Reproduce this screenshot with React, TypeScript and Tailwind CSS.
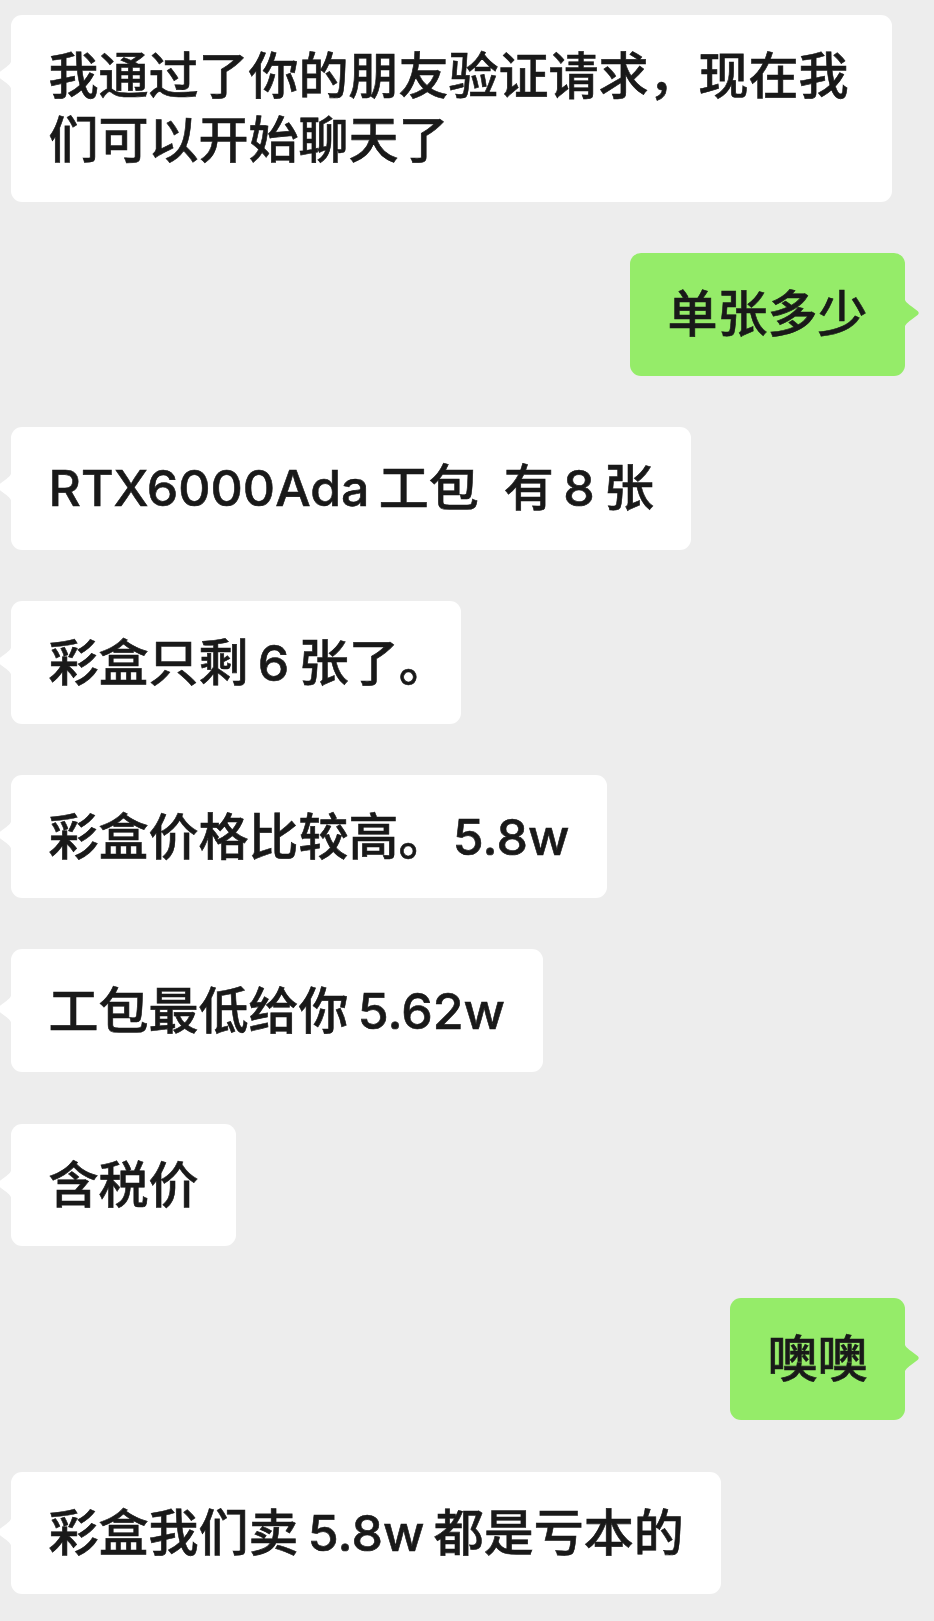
import React from 'react';

type Msg = { side: 'left' | 'right'; text: React.ReactNode };

const messages: Msg[] = [
  { side: 'left', text: '我通过了你的朋友验证请求，现在我们可以开始聊天了' },
  { side: 'right', text: '单张多少' },
  { side: 'left', text: 'RTX6000Ada 工包\u2002有 8 张' },
  {
    side: 'left',
    text: (
      <>
        彩盒只剩 6 张了<span className="tracking-[-0.5em]">。</span>
      </>
    ),
  },
  { side: 'left', text: '彩盒价格比较高。\u200a5.8w' },
  { side: 'left', text: '工包最低给你 5.62w' },
  { side: 'left', text: '含税价' },
  { side: 'right', text: '噢噢' },
  { side: 'left', text: '彩盒我们卖 5.8w 都是亏本的' },
];

const Tail: React.FC<{ side: 'left' | 'right' }> = ({ side }) => (
  <svg
    viewBox="0 0 16 36"
    className={
      side === 'right'
        ? 'absolute top-[42px] -right-[15px] w-[16px] h-[36px]'
        : 'absolute top-[42px] -left-[15px] w-[16px] h-[36px] -scale-x-100'
    }
  >
    {/* little pointer on the side of the bubble */}
    <path
      d="M0 0 C0 6 3 8 7 11 L13.6 16 Q15.8 18 13.6 20 L7 25 C3 28 0 30 0 36 Z"
      fill={side === 'right' ? '#95ec69' : '#ffffff'}
    />
  </svg>
);

const Bubble: React.FC<Msg> = ({ side, text }) => {
  const isRight = side === 'right';
  return (
    <div
      className={
        isRight
          ? 'relative self-end mr-[29px] rounded-[11px] bg-[#95ec69] px-[37.5px] py-[29.3px]'
          : 'relative self-start ml-[11px] max-w-[881px] rounded-[11px] bg-white px-[37.5px] py-[29.3px]'
      }
    >
      <Tail side={side} />
      <p className="whitespace-pre-wrap text-[50px] font-medium leading-[64px] text-[#191919] [word-spacing:-4px] [-webkit-text-stroke:0.6px_#191919]">
        {text}
      </p>
    </div>
  );
};

const App: React.FC = () => {
  return (
    <div className="min-h-[1621px] w-full overflow-hidden bg-[#ededed] pt-[15px] pb-[28px] font-['Inter','Noto_Sans_CJK_SC',sans-serif]">
      <div className="flex flex-col gap-[51.5px]">
        {messages.map((m, i) => (
          <Bubble key={i} side={m.side} text={m.text} />
        ))}
      </div>
    </div>
  );
};

export default App;
